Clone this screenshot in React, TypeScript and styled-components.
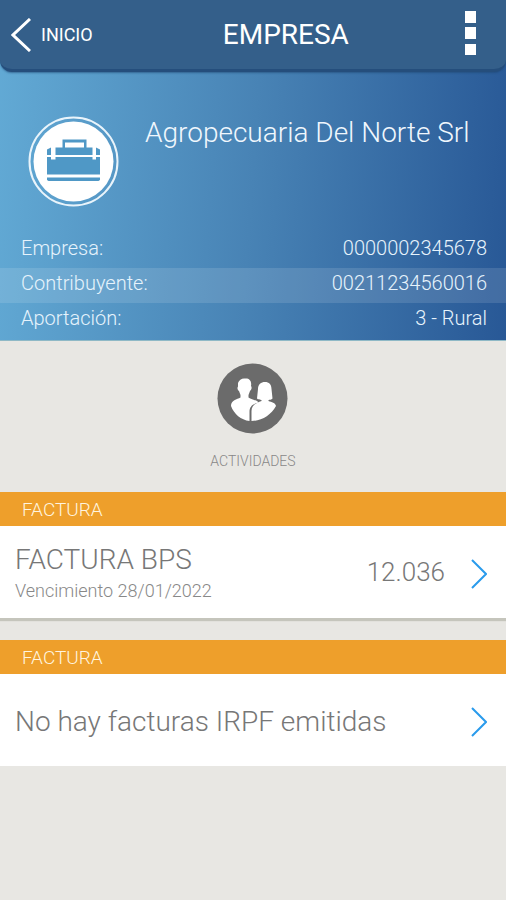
import React from "react";
import styled, { createGlobalStyle } from "styled-components";

const GlobalStyle = createGlobalStyle`
  *, *::before, *::after { box-sizing: border-box; }
  body {
    margin: 0;
    background: #e8e7e3;
    font-family: Roboto, "Liberation Sans", sans-serif;
    font-weight: 300;
  }
  h1, h2, h3, p, dl, dt, dd { margin: 0; font-weight: inherit; }
  button { border: 0; background: none; padding: 0; font: inherit; color: inherit; cursor: pointer; }
`;

const Top = styled.div`
  background: linear-gradient(94deg, #62aad5 0%, #4883b5 50%, #285896 100%);
  border-bottom: 1px solid #8fb9c6;
`;

const TopBar = styled.header`
  display: flex;
  align-items: center;
  height: 72px;
  padding: 0 30px 0 11px;
  color: #fff;
  background: #345f8a;
  border-bottom: 3px solid #254e7c;
  border-radius: 0 0 12px 12px;
  box-shadow: 0 1px 2px rgba(30, 70, 115, 0.6);
`;

const BackButton = styled.button`
  display: flex;
  align-items: center;
  gap: 10px;
  padding-right: 15px;
  font-size: 18px;
  font-weight: 400;
`;

const BarTitle = styled.h1`
  flex: 1;
  text-align: center;
  font-size: 28px;
  line-height: 32px;
  font-weight: 400;
`;

const MenuButton = styled.button`
  display: flex;
  padding-bottom: 4px;
`;

const Company = styled.section`
  display: flex;
  gap: 26px;
  padding: 44px 28px 26px;
  color: #f0f7fd;
`;

const CompanyName = styled.h2`
  font-size: 28px;
  line-height: 34px;
`;

const Details = styled.dl`
  padding-bottom: 2px;
`;

const DetailRow = styled.div<{ $highlighted?: boolean }>`
  display: flex;
  justify-content: space-between;
  padding: 0 19px 5px 21px;
  font-size: 20px;
  line-height: 30px;
  color: #e6f3fc;
  background: ${(p) => (p.$highlighted ? "rgba(255, 255, 255, 0.12)" : "transparent")};
`;

const Activities = styled.nav`
  display: flex;
  justify-content: center;
  padding: 22px 0;
`;

const ActivityButton = styled.button`
  display: flex;
  flex-direction: column;
  align-items: center;
  gap: 18px;
  font-size: 14px;
  line-height: 18px;
  color: #888;
`;

const Invoice = styled.section`
  margin-bottom: 22px;
`;

const InvoiceHeading = styled.h2`
  padding: 1px 22px 0;
  font-size: 19px;
  line-height: 33px;
  color: #fff4df;
  background: #ee9f2b;
`;

const InvoiceRow = styled.button<{ $raised?: boolean }>`
  display: flex;
  align-items: center;
  width: 100%;
  min-height: 92px;
  padding: 4px 19px 0 15px;
  text-align: left;
  color: #777;
  background: #fff;
  box-shadow: ${(p) => (p.$raised ? "0 3px 1px #c5c5bc" : "none")};
`;

const InvoiceText = styled.div`
  flex: 1;
`;

const InvoiceTitle = styled.h3`
  font-size: 28px;
  line-height: 34px;
`;

const DueDate = styled.p`
  font-size: 18px;
  line-height: 28px;
  color: #888;
`;

const Amount = styled.span`
  margin-right: 26px;
  padding-bottom: 4px;
  font-size: 26px;
`;

const BackIcon = () => (
  <svg width="20" height="34" viewBox="0 0 20 34" fill="none" stroke="#fff" strokeWidth="3" aria-hidden="true">
    <path d="M19 1 2 17 19 33" />
  </svg>
);

const MenuIcon = () => (
  <svg width="12" height="44" viewBox="0 0 12 44" fill="#fff" aria-hidden="true">
    <path d="M1 0h11v12H1zM1 16h11v12H1zM1 33h11v11H1z" />
  </svg>
);

const ForwardIcon = () => (
  <svg width="16" height="30" viewBox="0 0 16 30" fill="none" stroke="#2a9bec" strokeWidth="2" aria-hidden="true">
    <path d="M1 1 15 15 1 29" />
  </svg>
);

const BriefcaseIcon = () => (
  <svg width="91" height="91" viewBox="0 0 91 91" aria-hidden="true">
    <circle cx="45.500" cy="45.500" r="44" fill="none" stroke="#e9f4fb" strokeWidth="2" />
    <circle cx="45.500" cy="45.500" r="40" fill="#fff" />
    <g fill="#4f98c6">
      <path d="M34.500 32V23.500h24V32H56v-5.500H37V32z" />
      <path d="M27.500 31.500h37v7.500h-37z" />
      <path d="M23 31.500V39h-4v-5.500zM68 31.500l4 2V39h-4z" />
      <path d="M19 41h4v2.500h4.500V41h37v2.500H68V41h4v17.500H19z" />
      <path d="M19 61.500h53V64l-1.500 1h-50L19 64z" />
    </g>
  </svg>
);

const PeopleIcon = () => (
  <svg width="71" height="71" viewBox="0 0 71 71" aria-hidden="true">
    <circle cx="35.500" cy="35.500" r="35" fill="#6b6b6b" />
    <g fill="#fff">
      <path d="M21 20c1-3 4-5 7-4.500 4-.5 7 2 6 7.500 1.200 1.500.5 4-1 5l-1.500 4v2.500c3 2 8 2.500 10 5C35 41 32.500 44 32.500 49v9C24 57 17 51 14 43c0-6 6-6.500 9.500-8.500V32L22 28c-1.500-1-2-3-1-4.500z" />
      <path d="M41 26c0-4.500 3-7 7-7s6.500 2.500 6.500 7l1 9.500c-1 1.300-3 1.300-4 1.500v1c3 1 7 2 7.500 5C54 52 45 58 34.500 58V48c0-6 5-8 10-10v-1c-1.500-.2-3.500-.2-4.500-1.500z" />
    </g>
  </svg>
);

const details = [
  { label: "Empresa:", value: "0000002345678" },
  { label: "Contribuyente:", value: "00211234560016", highlighted: true },
  { label: "Aportación:", value: "3 - Rural" },
];

const invoices = [
  { title: "FACTURA BPS", due: "Vencimiento 28/01/2022", amount: "12.036" },
  { title: "No hay facturas IRPF emitidas" },
];

export default function App() {
  return (
    <>
      <GlobalStyle />
      <Top>
        <TopBar>
          <BackButton type="button">
            <BackIcon />
            INICIO
          </BackButton>
          <BarTitle>EMPRESA</BarTitle>
          <MenuButton type="button" aria-label="Menú">
            <MenuIcon />
          </MenuButton>
        </TopBar>
        <Company>
          <BriefcaseIcon />
          <CompanyName>Agropecuaria Del Norte Srl</CompanyName>
        </Company>
        <Details>
          {details.map((d) => (
            <DetailRow key={d.label} $highlighted={d.highlighted}>
              <dt>{d.label}</dt>
              <dd>{d.value}</dd>
            </DetailRow>
          ))}
        </Details>
      </Top>
      <main>
        <Activities>
          <ActivityButton type="button">
            <PeopleIcon />
            ACTIVIDADES
          </ActivityButton>
        </Activities>
        {invoices.map((invoice) => (
          <Invoice key={invoice.title}>
            <InvoiceHeading>FACTURA</InvoiceHeading>
            <InvoiceRow type="button" $raised={Boolean(invoice.due)}>
              <InvoiceText>
                <InvoiceTitle>{invoice.title}</InvoiceTitle>
                {invoice.due && <DueDate>{invoice.due}</DueDate>}
              </InvoiceText>
              {invoice.amount && <Amount>{invoice.amount}</Amount>}
              <ForwardIcon />
            </InvoiceRow>
          </Invoice>
        ))}
      </main>
    </>
  );
}
